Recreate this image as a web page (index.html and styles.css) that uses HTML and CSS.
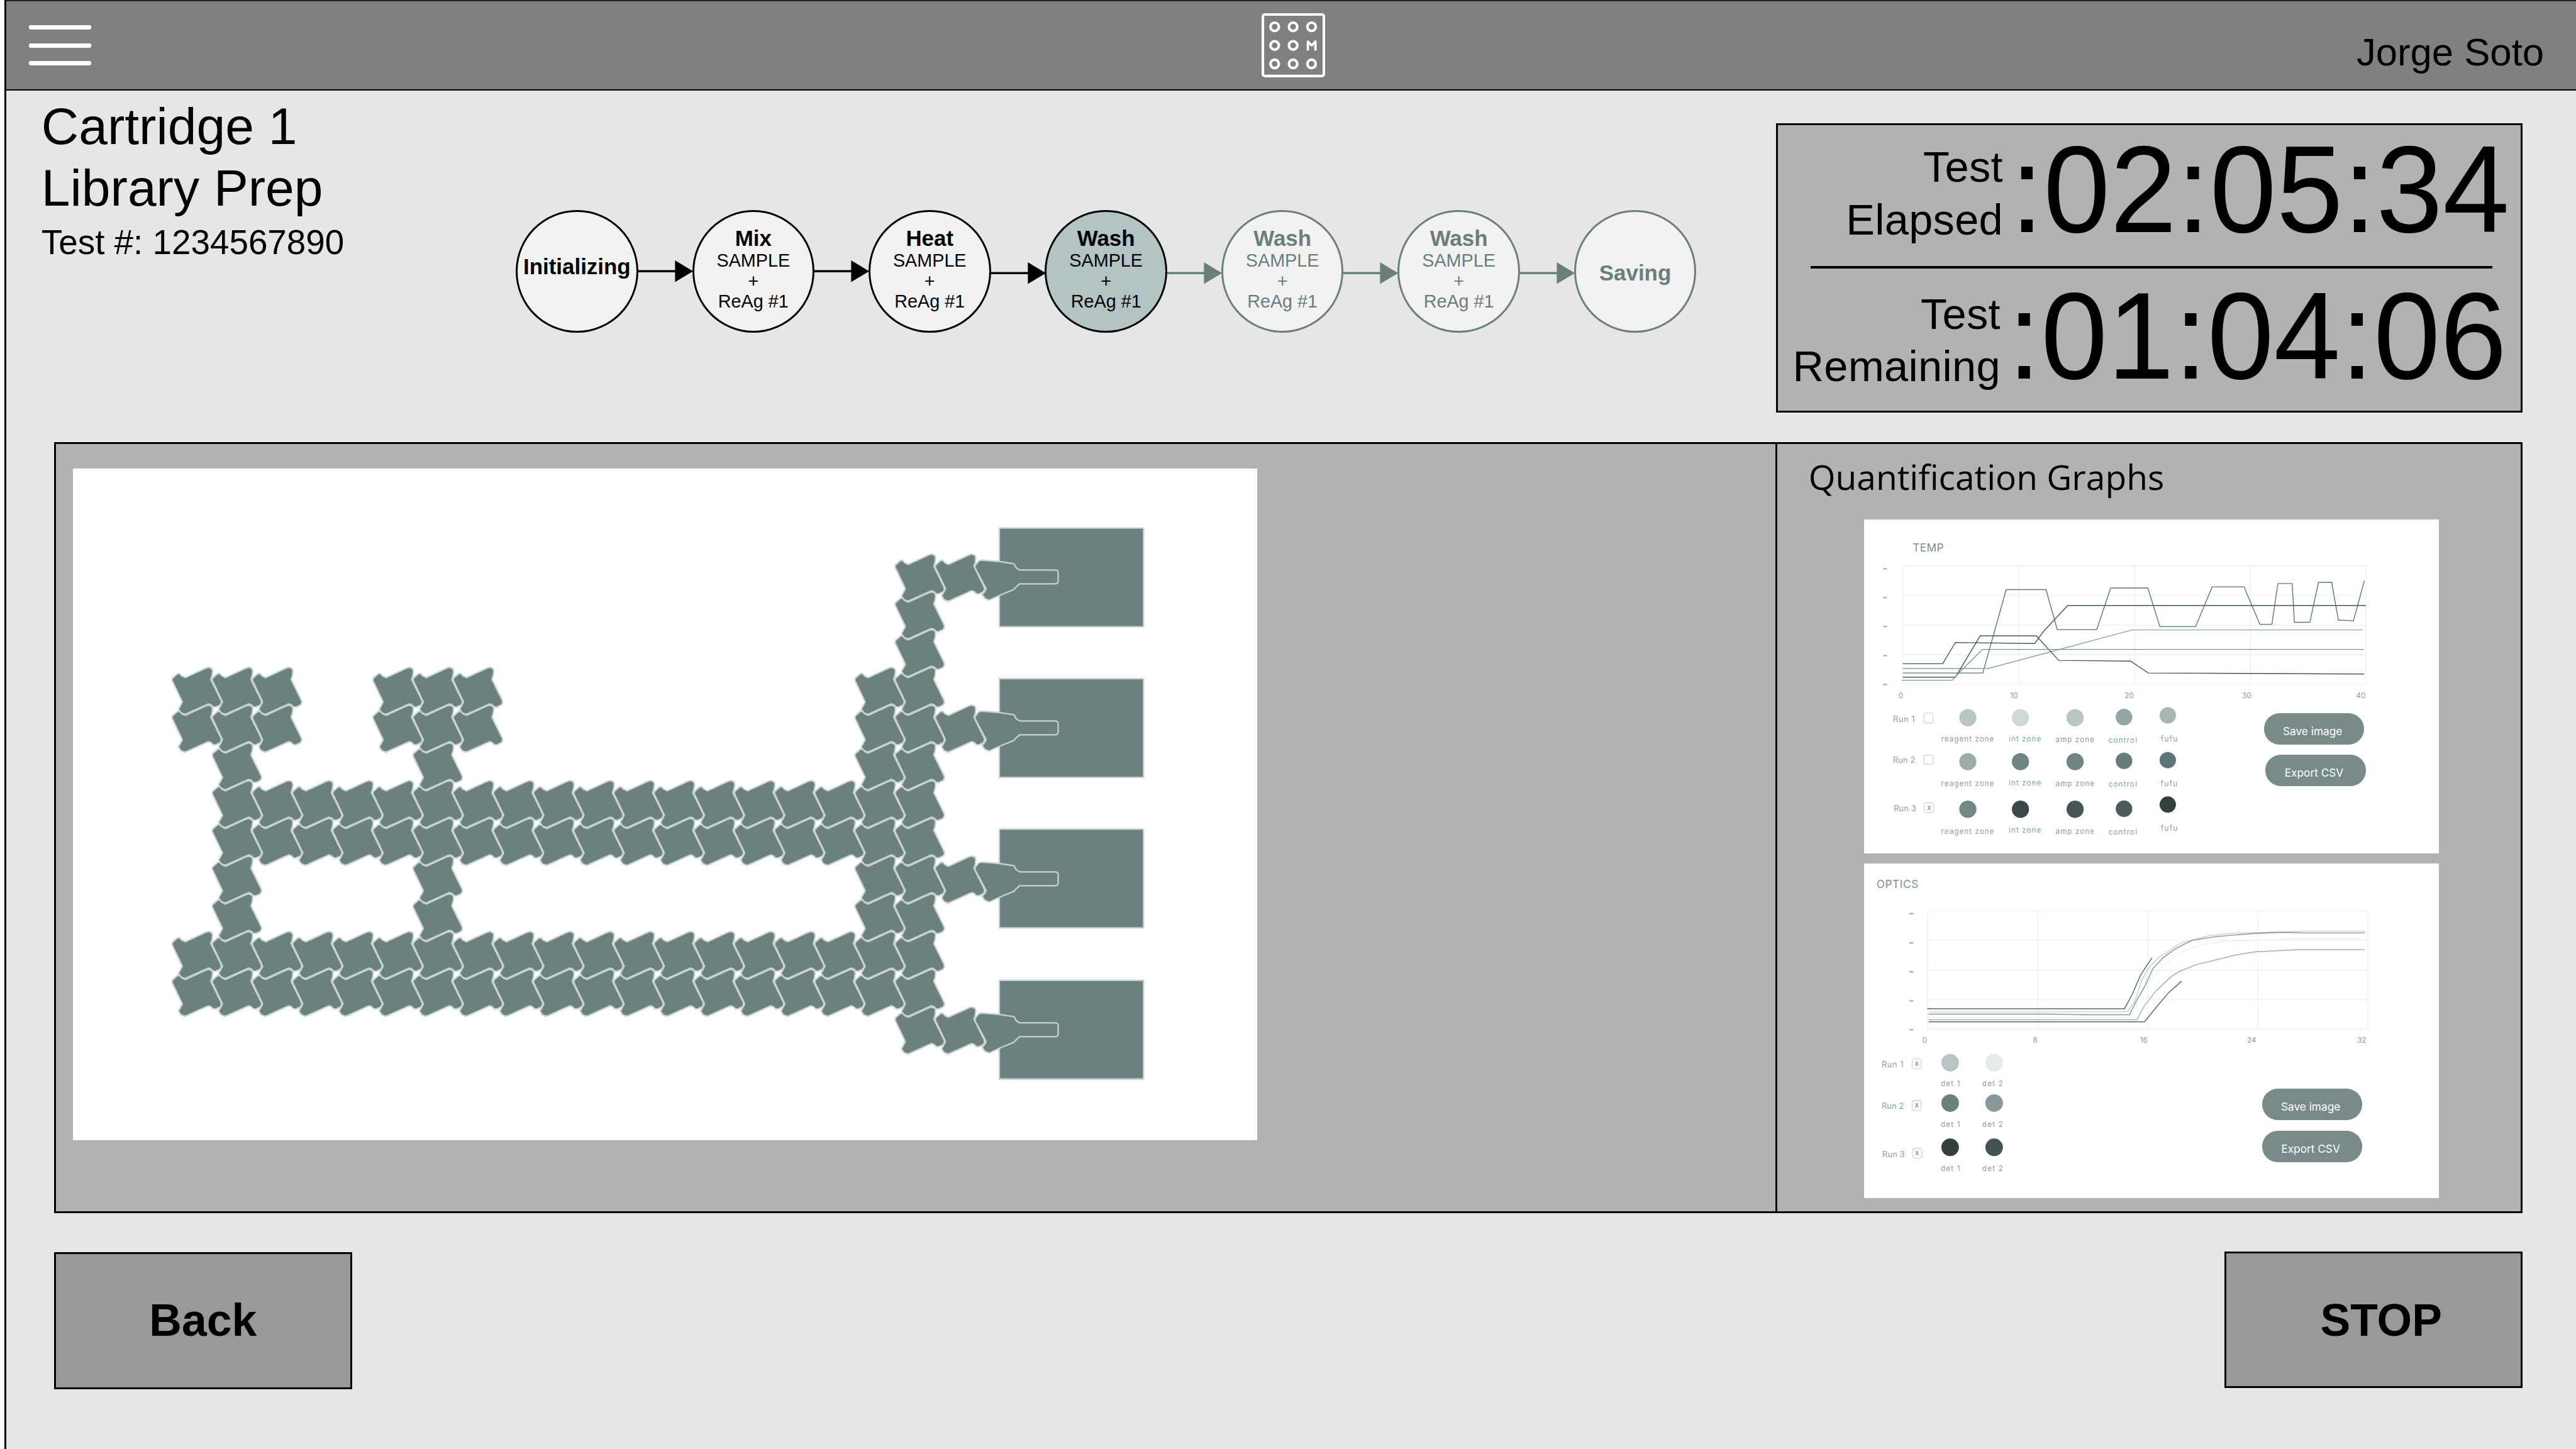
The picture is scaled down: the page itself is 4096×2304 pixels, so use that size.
FILE: index.html
```html
<!DOCTYPE html>
<html lang="en">
<head>
<meta charset="utf-8">
<title>Cartridge 1 - Library Prep</title>
<link rel="stylesheet" href="styles.css">
</head>
<body>
<div class="app">
  <header class="topbar">
    <div class="menu"><span></span><span></span><span></span></div>
    <svg class="logo" viewBox="0 0 123 124">
      <rect x="2.5" y="2.5" width="118" height="119" rx="4"/>
      <circle cx="25.3" cy="26.3" r="8.1"/><circle cx="61" cy="26.3" r="8.1"/><circle cx="96.7" cy="26.3" r="8.1"/>
      <circle cx="25.3" cy="62.3" r="8.1"/><circle cx="61" cy="62.3" r="8.1"/>
      <path class="logo-m" d="M89.6 70.2V54.8l7.3 7.6 7.3-7.6v15.4"/>
      <circle cx="25.3" cy="98" r="8.1"/><circle cx="61" cy="98" r="8.1"/><circle cx="96.7" cy="98" r="8.1"/>
    </svg>
    <div class="user">Jorge Soto</div>
  </header>

  <section class="summary">
    <div class="info">
      <h1>Cartridge 1<br>Library Prep</h1>
      <p>Test #: 1234567890</p>
    </div>

    <div class="steps">
      <div class="step single"><b>Initializing</b></div>
      <svg class="arrow" viewBox="0 0 104.5 42"><path d="M0 18.8h71V0l35 21-35 21V23.2H0z"/></svg>
      <div class="step"><b>Mix</b><span>SAMPLE</span><span>+</span><span>ReAg #1</span></div>
      <svg class="arrow" viewBox="0 0 104.5 42"><path d="M0 18.8h71V0l35 21-35 21V23.2H0z"/></svg>
      <div class="step"><b>Heat</b><span>SAMPLE</span><span>+</span><span>ReAg #1</span></div>
      <svg class="arrow low" viewBox="0 0 104.5 42"><path d="M0 18.8h71V0l35 21-35 21V23.2H0z"/></svg>
      <div class="step active"><b>Wash</b><span>SAMPLE</span><span>+</span><span>ReAg #1</span></div>
      <svg class="arrow low pending" viewBox="0 0 104.5 42"><path d="M0 18.8h71V0l35 21-35 21V23.2H0z"/></svg>
      <div class="step pending"><b>Wash</b><span>SAMPLE</span><span>+</span><span>ReAg #1</span></div>
      <svg class="arrow low pending" viewBox="0 0 104.5 42"><path d="M0 18.8h71V0l35 21-35 21V23.2H0z"/></svg>
      <div class="step pending"><b>Wash</b><span>SAMPLE</span><span>+</span><span>ReAg #1</span></div>
      <svg class="arrow low pending" viewBox="0 0 104.5 42"><path d="M0 18.8h71V0l35 21-35 21V23.2H0z"/></svg>
      <div class="step pending single last"><b>Saving</b></div>
    </div>

    <div class="timer">
      <div class="time elapsed"><div class="label">Test<br>Elapsed</div><div class="digits">:02:05:34</div></div>
      <hr>
      <div class="time remaining"><div class="label">Test<br>Remaining</div><div class="digits">:01:04:06</div></div>
    </div>
  </section>

  <main class="panel">
    <div class="chip-pane">
      <svg class="chip" viewBox="140 906 2291 1299">
        <defs>
          <path id="t" d="M0 25.500L1 21.500 10.500 13 14.500 12.600 19 17.500 25.800 20.500 66 2 70.800 0.500 77 3 78.500 8 77.500 16 75 24 95 64.500 95.500 69 93 73.500 84.500 77.500 79.500 77 75.500 73 70.300 71.300 29 90 24.500 91.500 17 88.500 12.600 81.300 17 73.500 20 67.500z"/>
          <g id="r3"><use href="#t"/><use href="#t" x="77.7"/><use href="#t" x="155.400"/></g>
          <g id="r17"><use href="#t"/><use href="#t" x="77.7"/><use href="#t" x="155.400"/><use href="#t" x="233.100"/><use href="#t" x="310.800"/><use href="#t" x="388.500"/><use href="#t" x="466.200"/><use href="#t" x="543.900"/><use href="#t" x="621.600"/><use href="#t" x="699.300"/><use href="#t" x="777"/><use href="#t" x="854.700"/><use href="#t" x="932.400"/><use href="#t" x="1010.100"/><use href="#t" x="1087.800"/><use href="#t" x="1165.500"/><use href="#t" x="1243.200"/><use href="#t" x="1320.900"/></g>
          <path id="n" d="M0 26L1 22 8 13.500 14 12.300 47.700 15 74 19 77 20.500 79.500 26.500 86.700 31.300H154Q161.300 31.300 161.300 36V53Q161.300 58 154 58H86.700L78.500 65.500 75.500 69 47.700 80.400 28 89.500 20 86.500 14.300 79 19.500 72.500 22.100 67.500z"/>
        </defs>
        <g class="wells">
          <rect x="1932" y="1021" width="279" height="191"/><rect x="1932" y="1312.500" width="279" height="191"/>
          <rect x="1932" y="1603.500" width="279" height="191"/><rect x="1932" y="1896" width="279" height="191"/>
        </g>
        <g class="tiles">
          <use href="#t" x="1730.200" y="1071"/><use href="#t" x="1807.900" y="1071"/><use href="#n" x="1884.500" y="1071"/>
          <use href="#t" x="1730.200" y="1144"/><use href="#t" x="1730.200" y="1217"/>
          <use href="#r3" x="331.600" y="1290"/><use href="#r3" x="720.100" y="1290"/>
          <use href="#t" x="1652.500" y="1290"/><use href="#t" x="1730.200" y="1290"/>
          <use href="#r3" x="331.600" y="1363"/><use href="#r3" x="720.100" y="1363"/>
          <use href="#r3" x="1652.500" y="1363"/><use href="#n" x="1884.500" y="1363"/>
          <use href="#t" x="409.300" y="1436"/><use href="#t" x="797.800" y="1436"/>
          <use href="#t" x="1652.500" y="1436"/><use href="#t" x="1730.200" y="1436"/>
          <use href="#r17" x="409.300" y="1509"/>
          <use href="#r17" x="409.300" y="1582"/>
          <use href="#t" x="409.300" y="1655"/><use href="#t" x="797.800" y="1655"/>
          <use href="#r3" x="1652.500" y="1655"/><use href="#n" x="1884.500" y="1655"/>
          <use href="#t" x="409.300" y="1728"/><use href="#t" x="797.800" y="1728"/>
          <use href="#t" x="1652.500" y="1728"/><use href="#t" x="1730.200" y="1728"/>
          <use href="#t" x="331.600" y="1801"/><use href="#r17" x="409.300" y="1801"/>
          <use href="#t" x="331.600" y="1874"/><use href="#r17" x="409.300" y="1874"/>
          <use href="#t" x="1730.200" y="1947"/><use href="#t" x="1807.900" y="1947"/><use href="#n" x="1884.500" y="1947"/>
        </g>
      </svg>
    </div>

    <aside class="graphs">
      <h2>Quantification Graphs</h2>

      <article class="card">
        <svg class="plot" viewBox="0 0 1111 356">
          <text class="name" x="94" y="62" textLength="60">TEMP</text>
          <g class="lines" transform="translate(-16 -14) scale(.72706 .33333)">
            <path class="grid" d="M125 312H1357V997H125zM433 312V997M742 312V997M1049 312V997M125 482H1357M125 655H1357M125 826H1357"/>
            <path class="ticks" d="M73 328h10M73 496h10M73 664h10M73 832h10M73 1000h10"/>
            <path stroke="#5f7676" d="M125 933H338L400 449H506L536 681H641L678 440H777L809 664H904L948 433H1033L1075 650H1107L1123 414H1161L1167 639H1208L1231 407H1266L1284 626 1324 630 1353 398"/>
            <path stroke="#46595a" d="M125 879H231L265 756 476 762 500 690 564 541H1357"/>
            <path stroke="#8fa3a1" d="M125 907H352L735 683H1348"/>
            <path stroke="#455a5a" d="M125 957H265L331 717H480L540 860 731 864 778 933 1352 939"/>
            <path stroke="#7d9391" d="M122 975H257L273 935 337 796H1352"/>
          </g>
          <g class="axis"><text x="71.200" y="345">0</text><text x="290" y="345">10</text><text x="512.600" y="345">20</text><text x="740" y="345">30</text><text x="961" y="345">40</text></g>
        </svg>
        <div class="controls">
          <svg class="legend" viewBox="0 356 760 290">
            <g class="run"><text x="56" y="392.300" textLength="42">Run 1</text><text x="56" y="472" textLength="43">Run 2</text><text x="57.400" y="565" textLength="43">Run 3</text></g>
            <g class="box"><rect x="115.500" y="375.500" width="18" height="19" rx="4"/><rect x="115.500" y="456.500" width="18" height="18" rx="4"/><rect x="116.500" y="548.500" width="18" height="19" rx="4"/></g>
            <text class="mark" x="125.700" y="562.500">x</text>
            <circle cx="200.700" cy="384.300" r="16.600" fill="#b7c5c4"/><circle cx="302.500" cy="384.300" r="16.600" fill="#cfd9d7"/><circle cx="408.200" cy="384.300" r="16.600" fill="#b7c5c4"/><circle cx="502.800" cy="383" r="16" fill="#93a5a4"/><circle cx="587.500" cy="379.700" r="15.800" fill="#a6b6b5"/>
            <circle cx="200.700" cy="469.300" r="16.600" fill="#9bacab"/><circle cx="302.500" cy="469.300" r="16.600" fill="#6f8483"/><circle cx="408.200" cy="469.300" r="16.600" fill="#6f8483"/><circle cx="502.800" cy="467.700" r="16" fill="#687c7b"/><circle cx="587.500" cy="466.300" r="15.800" fill="#607376"/>
            <circle cx="200.700" cy="561.300" r="16.600" fill="#728786"/><circle cx="302.500" cy="561.300" r="16.600" fill="#3a4848"/><circle cx="408.200" cy="561.300" r="16.600" fill="#465656"/><circle cx="502.800" cy="560.300" r="16" fill="#4c5c5c"/><circle cx="587.500" cy="552.300" r="15.800" fill="#344040"/>
            <g class="zone">
              <text x="149" y="430.300" textLength="102">reagent zone</text><text x="280" y="429.700" textLength="62">int zone</text><text x="370.500" y="432" textLength="74.500">amp zone</text><text x="473" y="432.700" textLength="55">control</text><text x="574" y="429.700" textLength="32">fufu</text>
              <text x="149" y="516.300" textLength="102">reagent zone</text><text x="280" y="515" textLength="62">int zone</text><text x="370.500" y="516.300" textLength="74.500">amp zone</text><text x="473" y="518" textLength="55">control</text><text x="574" y="516" textLength="32">fufu</text>
              <text x="149" y="609" textLength="102">reagent zone</text><text x="280" y="607" textLength="62">int zone</text><text x="370.500" y="609" textLength="74.500">amp zone</text><text x="473" y="610" textLength="55">control</text><text x="574" y="603" textLength="32">fufu</text>
            </g>
          </svg>
          <div class="actions"><button>Save image</button><button>Export CSV</button></div>
        </div>
      </article>

      <article class="card optics">
        <svg class="plot" viewBox="0 0 1111 356">
          <text class="name" x="24" y="47" textLength="81">OPTICS</text>
          <g class="lines" transform="translate(-16 -9.700) scale(.72706 .33333)">
            <path class="grid" d="M191 303H1362V991H191zM484.500 303V991M776.500 303V991M1069 303V991M191 474H1362M191 648H1362M191 819H1362"/>
            <path class="ticks" d="M142 320h11M142 490h11M142 658h11M142 826h11M142 994h11"/>
            <path stroke="#eef2f2" d="M194 921H728L745 860 765 760 790 690 830 598 870 540 918 502 985 479 1110 474 1150 465H1354"/>
            <path stroke="#c3d0ce" d="M194 890H722L742 830 760 710 780 632 806 575 836 532 866 490 900 470 940 448 1010 433 1120 427 1200 421H1355"/>
            <path stroke="#7f9593" d="M194 903H520L600 907H728L748 820 768 745 780 690 790 640 818 575 852 522 895 475 960 453 1060 435 1135 429 1190 432H1355"/>
            <path stroke="#9db0ae" d="M194 936H748L768 855 800 765 840 684 862 655 905 616 950 593 1010 560 1065 541 1180 529H1354"/>
            <path stroke="#516767" d="M190 872H715L735 790 757 680 771 632 788 577"/>
            <path stroke="#516767" d="M194 948H768L800 862 833 777 867 712"/>
          </g>
          <g class="axis"><text x="117" y="347.300">0</text><text x="330.800" y="347.300">8</text><text x="541" y="347.300">16</text><text x="749.600" y="347.300">24</text><text x="962.600" y="347.300">32</text></g>
        </svg>
        <div class="controls">
          <svg class="legend" viewBox="0 356 760 290">
            <g class="run"><text x="34" y="394" textLength="42">Run 1</text><text x="34" y="474.300" textLength="43">Run 2</text><text x="35.400" y="567.300" textLength="43">Run 3</text></g>
            <g class="box"><rect x="92.800" y="377.500" width="18" height="19" rx="4"/><rect x="92.800" y="458" width="18" height="19" rx="4"/><rect x="93.800" y="550.500" width="18" height="19" rx="4"/></g>
            <text class="mark" x="102" y="391.700">x</text><text class="mark" x="102" y="471.500">x</text><text class="mark" x="102.500" y="564.500">x</text>
            <circle cx="166.500" cy="385" r="17" fill="#b7c5c4"/><circle cx="251.600" cy="385" r="17" fill="#e5ebea"/>
            <circle cx="166.500" cy="463" r="17" fill="#6c8080"/><circle cx="251.600" cy="463" r="17" fill="#879a99"/>
            <circle cx="166.500" cy="548.600" r="17" fill="#333f41"/><circle cx="251.600" cy="548.600" r="17" fill="#435353"/>
            <g class="zone">
              <text x="148.500" y="430.300" textLength="37">det 1</text><text x="228.500" y="430.300" textLength="40">det 2</text>
              <text x="148.500" y="509.300" textLength="37">det 1</text><text x="228.500" y="509.300" textLength="40">det 2</text>
              <text x="148.500" y="594.300" textLength="37">det 1</text><text x="228.500" y="594.300" textLength="40">det 2</text>
            </g>
          </svg>
          <div class="actions"><button>Save image</button><button>Export CSV</button></div>
        </div>
      </article>
    </aside>
  </main>

  <footer class="footer">
    <button class="back">Back</button>
    <button class="stop">STOP</button>
  </footer>
</div>
</body>
</html>
```
FILE: styles.css
```css
/* 1rem is one hundred design units */
html { font-size: 82.2px; }
* { box-sizing: border-box; margin: 0; }
body {
  width: 49.83rem;
  height: 28.03rem;
  overflow: hidden;
  background: #fff;
  color: #000;
  font-family: "Liberation Sans", Arial, sans-serif;
}
svg { display: block; }
button { font: inherit; color: inherit; padding: 0; }

.app {
  height: 28.03rem;
  margin-left: .08rem;
  border-left: .04rem solid #000;
  background: #e6e6e6;
}

/* Top bar */
.topbar {
  display: flex;
  align-items: flex-start;
  height: 1.75rem;
  background: #808080;
  border-top: .035rem solid #222;
  border-bottom: .025rem solid #000;
}
.menu {
  display: flex;
  flex-direction: column;
  gap: .26rem;
  width: 1.2rem;
  margin: .465rem 0 0 .445rem;
}
.menu span { height: .085rem; border-radius: .03rem; background: #fff; }
.logo { width: 1.23rem; height: 1.24rem; margin: .235rem 0 0 22.645rem; }
.logo * { fill: none; stroke: #fff; stroke-width: 5; }
.logo .logo-m { stroke-width: 4.6; stroke-linecap: round; stroke-linejoin: round; }
.user { margin: .535rem .62rem 0 auto; font-size: .75rem; line-height: .9rem; }

/* Summary */
.summary { display: flex; align-items: flex-start; height: 6.8rem; }
.info { width: 9.86rem; padding: .1rem 0 0 .685rem; }
.info h1 { font-size: 1rem; font-weight: 400; line-height: 1.196rem; }
.info p { margin-top: .047rem; font-size: .6667rem; line-height: .8rem; }

.steps { display: flex; align-items: flex-start; padding-top: 2.31rem; }
.step {
  display: flex;
  flex-direction: column;
  align-items: center;
  width: 2.367rem;
  height: 2.377rem;
  padding-top: .32rem;
  border: .042rem solid #000;
  border-radius: 50%;
  background: #f2f2f2;
  white-space: nowrap;
}
.step b { font-size: .425rem; line-height: .4rem; margin-bottom: .025rem; }
.step span { font-size: .35rem; line-height: .397rem; }
.step.active { background: #b4c4c2; }
.step.pending { border-color: #6a7e7e; color: #6a7e7e; }
.step.single { padding-top: .87rem; }
.step.last { padding-top: .99rem; }
.arrow { width: 1.045rem; height: .42rem; margin-top: .98rem; overflow: visible; }
.arrow.low { margin-top: 1.013rem; }
.arrow.pending { fill: #6a7e7e; }

.timer {
  width: 14.45rem;
  height: 5.6rem;
  margin: .63rem 1.03rem 0 auto;
  border: .042rem solid #000;
  background: #b2b2b2;
}
.time { display: flex; align-items: flex-start; height: 2.735rem; }
.timer hr { width: 13.18rem; height: .045rem; margin-left: .64rem; border: 0; background: #000; }
.label { width: 4.36rem; padding-top: .314rem; text-align: right; font-size: .8333rem; line-height: 1.015rem; letter-spacing: .004rem; }
.digits { padding: .125rem 0 0 .14rem; font-size: 2.315rem; line-height: 2.31rem; white-space: nowrap; transform: scaleY(1.03); transform-origin: 0 2.08rem; }
.remaining { margin-left: -.05rem; }
.remaining .label { padding-top: .37rem; }
.remaining .digits { padding-top: .185rem; }

/* Main panel */
.panel {
  display: flex;
  width: 47.755rem;
  height: 14.92rem;
  margin-left: .925rem;
  border: .042rem solid #000;
  background: #b2b2b2;
}
.chip-pane { width: 33.26rem; padding: .475rem 0 0 .33rem; }
.chip { width: 22.91rem; height: 12.99rem; background: #fff; }
.tiles, .wells { fill: #6c8080; stroke: #c6d2d0; stroke-width: 2.8; stroke-linejoin: round; }

.graphs { flex: 1; border-left: .042rem solid #000; padding: .187rem 0 0 .61rem; }
.graphs h2 {
  margin-bottom: .37rem;
  font: 400 .67rem/.9rem "Open Sans", "Noto Sans", sans-serif;
  font-feature-settings: "liga", "dlig";
}
.card { width: 11.11rem; height: 6.47rem; margin: 0 0 .19rem 1.08rem; background: #fff; overflow: hidden; }
.plot { width: 11.11rem; height: 3.56rem; }
.controls { display: flex; }
.legend { width: 7.6rem; height: 2.9rem; }
.card text { font-family: Inter, Roboto, sans-serif; fill: #8aa09e; }
.card .name { font-size: 21px; fill: #7b908e; }
.axis text { font-size: 14.5px; text-anchor: middle; }
.run text { font-size: 15.5px; }
.zone text { font-size: 14px; }
.card .mark { font-size: 14px; text-anchor: middle; fill: #6a7e7e; }
.box rect { fill: none; stroke: #c3d1cf; stroke-width: 1.3; }
.lines path { fill: none; stroke-width: 1.4; vector-effect: non-scaling-stroke; }
.lines .grid { stroke: #edf1f1; }
.lines .ticks { stroke: #a3b8b4; stroke-width: 2.4; }

.actions { display: flex; flex-direction: column; gap: .205rem; padding: .19rem 0 0 .13rem; }
.actions button {
  width: 1.942rem;
  height: .605rem;
  padding: .11rem .06rem 0 0;
  border: 0;
  border-radius: .3rem;
  background: #788b8a;
  color: #fff;
  font: .21rem/.3rem Inter, Roboto, sans-serif;
}
.actions button + button { position: relative; left: .028rem; }
.optics .actions { gap: .21rem; padding: .8rem 0 0 .092rem; }
.optics .actions button + button { left: 0; }

/* Footer */
.footer { display: flex; justify-content: space-between; padding: .735rem 1.03rem 0 .925rem; }
.footer button {
  width: 5.77rem;
  height: 2.65rem;
  padding-bottom: .04rem;
  border: .042rem solid #000;
  background: #999;
  font-size: .87rem;
  font-weight: 700;
}
.footer .back { margin-top: .02rem; }
.footer .stop { padding-left: .29rem; padding-bottom: 0; }
```
